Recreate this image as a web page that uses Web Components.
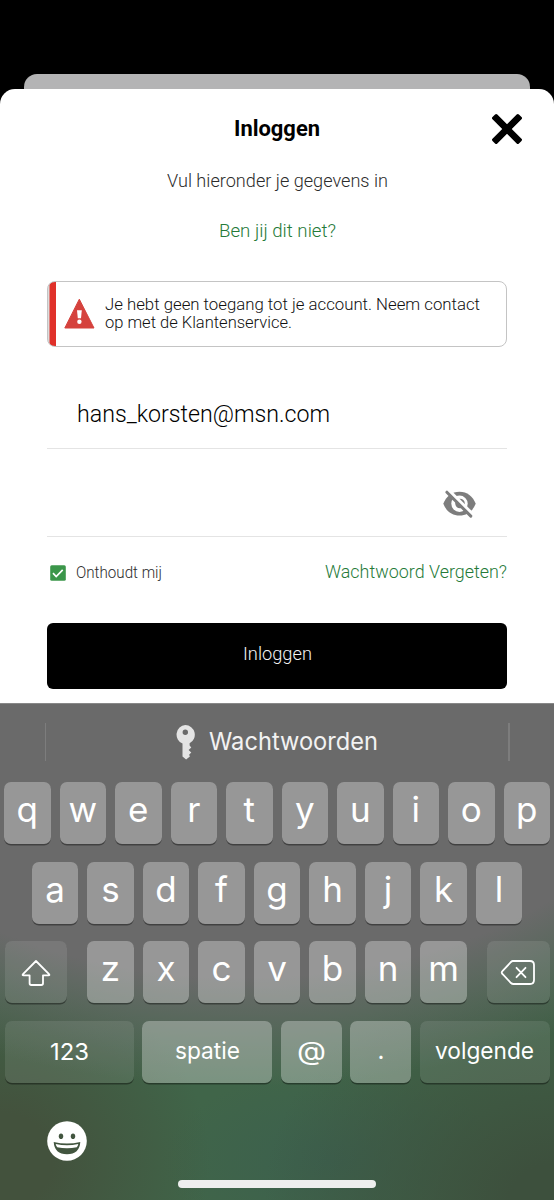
<!DOCTYPE html>
<html lang="nl">
<head>
<meta charset="utf-8">
<title>Inloggen</title>
<style>
html,body{margin:0;height:100%;background:#000;overflow:hidden}
</style>
</head>
<body>
<login-screen></login-screen>
<script>
const define=(name,html,setup)=>customElements.define(name,class extends HTMLElement{
  connectedCallback(){
    if(this.shadowRoot)return;
    const t=document.createElement('template');
    t.innerHTML=typeof html==='function'?html(this):html;
    this.attachShadow({mode:'open'}).appendChild(t.content.cloneNode(true));
    if(setup)setup(this,this.shadowRoot);
  }
});

/* One line of text, narrowed or widened to the width in its "w" attribute. */
define('fit-text',`<style>
:host{display:block;white-space:nowrap;line-height:1.3;flex:none}
span{display:inline-block;transform-origin:0 50%}
</style><span><slot></slot></span>`,(el,root)=>{
  const w=+el.getAttribute('w');
  el.style.fontSize=el.getAttribute('size')+'px';
  el.style.width=w+'px';
  const s=root.querySelector('span');
  s.style.transform='scaleX('+w/s.getBoundingClientRect().width+')';
});

define('close-icon',`<style>:host{display:block}svg{display:block}</style>
<svg width="32" height="32" viewBox="-16 -16 32 32"><rect x="-18.7" y="-3.4" width="37.4" height="6.8" rx="1.6" transform="rotate(45)"/><rect x="-18.7" y="-3.4" width="37.4" height="6.8" rx="1.6" transform="rotate(-45)"/></svg>`);

define('alert-box',`<style>
:host{display:flex;align-items:flex-start;box-sizing:border-box;height:66px;margin:38px 47px 0;border:1.5px solid #c4c4c4;border-radius:8px;overflow:hidden;background:linear-gradient(90deg,#ddd 1px,#e0312a 2px,#e0312a 8px,#fff 8px)}
svg{display:block;margin:16px 10px 0 16px;flex:none}
div{padding-top:12.5px;color:#111}
::slotted(fit-text){line-height:18px!important}
</style>
<svg width="31" height="31" viewBox="0 0 31 31"><path d="M15.3 1.2 30 30H.8Z" fill="#d5423d" stroke="#d5423d" stroke-linejoin="round"/><path d="M13 12.3h4.8l-.8 8h-3.2z" fill="#fff"/><circle cx="15.4" cy="23.7" r="2.2" fill="#fff"/></svg>
<div><slot></slot></div>`);

define('input-row',`<style>
:host{display:flex;align-items:center;justify-content:space-between;margin:0 47px;padding:0 30px;box-sizing:border-box;border-bottom:1.5px solid #e4e4e4;color:#111}
</style><slot></slot>`);

define('eye-off',`<style>:host{display:block;margin-left:auto}svg{display:block}</style>
<svg width="35" height="32" viewBox="0 0 35 32"><path d="M1.3 15.8C4 8.5 10 3.8 17.5 3.8S31 8.5 33.7 15.8C31 23 25 27.6 17.5 27.6S4 23 1.3 15.8Z" fill="#7d7d7d"/><circle cx="17.5" cy="15.8" r="8.2" fill="#fff"/><circle cx="18" cy="15.5" r="4.8" fill="#7d7d7d"/><path d="M5.5 1 31.5 27" stroke="#fff" stroke-width="3.2"/><path d="M4.9 4.2 28.8 28.1" stroke="#7d7d7d" stroke-width="3" stroke-linecap="round"/></svg>`);

define('check-box',`<style>:host{display:block}svg{display:block}</style>
<svg width="16" height="16" viewBox="0 0 16 16"><rect x=".2" y=".2" width="15.6" height="15.6" rx="1.5" fill="#3b964a"/><path d="m3 8.2 3.2 3.3 6.5-6.6" fill="none" stroke="#fff" stroke-width="1.7"/></svg>`);

define('login-sheet',`<style>
:host{display:block;height:614px;background:#fff;border-radius:15px 15px 0 0;font-family:Roboto,"Liberation Sans",sans-serif;overflow:hidden;font-weight:350}
header{display:grid;grid-template-columns:1fr auto 1fr;align-items:center;height:80px;font-weight:700;color:#000}
header close-icon{justify-self:end;margin:0 31.5px 0 0}
.line{display:flex;justify-content:center;align-items:center;height:25px}
.sub{color:#2c2c2c}
.green{color:#257a38}
.who{margin-top:24px;padding-top:1px;box-sizing:border-box}
.mail{height:102px;padding-top:33px;color:#000}
.pass{height:88px;padding-top:22px}
.opts{display:flex;align-items:center;justify-content:space-between;height:25px;margin:22px 47px 0 50px;color:#2c2c2c}
.opts .green{padding-top:2px}
.keep{display:flex;align-items:center;gap:10px;padding-top:3px}
.btn{display:flex;align-items:center;justify-content:center;height:66px;margin:38.5px 47px 0;border-radius:6px;background:#000;color:#f4f4f4;box-sizing:border-box;padding-bottom:2px}
</style>
<header><i></i><fit-text size="22" w="86">Inloggen</fit-text><close-icon></close-icon></header>
<div class="line sub"><fit-text size="18.6" w="221">Vul hieronder je gegevens in</fit-text></div>
<div class="line who green"><fit-text size="18.6" w="117">Ben jij dit niet?</fit-text></div>
<alert-box><fit-text size="17" w="375">Je hebt geen toegang tot je account. Neem contact</fit-text><fit-text size="17" w="187">op met de Klantenservice.</fit-text></alert-box>
<input-row class="mail"><fit-text size="23.5" w="253">hans_korsten@msn.com</fit-text></input-row>
<input-row class="pass"><eye-off></eye-off></input-row>
<div class="opts"><div class="keep"><check-box></check-box><fit-text size="16.3" w="86">Onthoudt mij</fit-text></div><fit-text class="green" size="18.6" w="182">Wachtwoord Vergeten?</fit-text></div>
<div class="btn"><fit-text size="18.8" w="69">Inloggen</fit-text></div>`);

define('key-cap',`<style>
:host{display:flex;align-items:center;justify-content:center;box-sizing:border-box;height:62px;width:46.5px;flex:none;border-radius:7px;background:rgba(255,255,255,.3);box-shadow:0 1.5px 0 rgba(0,0,0,.38);color:#fff;font-size:35px;font-weight:370;line-height:44px;padding-bottom:8px}
:host([dark]){background:rgba(255,255,255,.095)}
:host([dark]),:host([word]){font-size:24px;font-weight:400;padding-bottom:2px}
</style><slot></slot>`);

define('key-row',el=>`<style>:host{display:flex;justify-content:center;gap:9px}</style>`+
  [...el.getAttribute('keys')].map(k=>`<key-cap>${k}</key-cap>`).join(''));

define('suggestion-bar',`<style>
:host{display:flex;align-items:center;height:78px;box-sizing:border-box;padding:0 44.5px;color:#f2f2f2}
i{width:1.5px;height:38px;background:#7d7d7d;margin-top:-3px}
div{flex:1;display:flex;align-items:center;justify-content:center;gap:13px;padding:0 2px 3px 0}
svg{display:block}
</style><i></i><div><svg width="21" height="36" viewBox="0 0 21 36"><path fill="#e4e4e4" fill-rule="evenodd" d="M10.3 1a9.7 9.7 0 0 1 4.3 18.3v2.2l1.7 2-2.7 2.5 2.7 2.4-2.2 2.3.8 1.7-3.8 3-3.6-3V19.6A9.7 9.7 0 0 1 10.3 1Zm0 4.5a2.7 2.7 0 1 0 0 5.4 2.7 2.7 0 0 0 0-5.4Z"/></svg><fit-text size="24.5" w="169">Wachtwoorden</fit-text></div><i></i>`);

define('soft-keyboard',`<style>
:host{display:flex;flex-direction:column;height:497px;box-sizing:border-box;border-top:1px solid #888;overflow:hidden;font-family:Inter,"Liberation Sans",sans-serif;
background:
 radial-gradient(ellipse 600px 375px at 44% 0,#6a6a6a 0,#6a6a6a 73%,rgba(106,106,106,.5) 87%,rgba(106,106,106,0) 102%),
 radial-gradient(ellipse 210px 190px at 0 92%,#43523d 25%,rgba(67,82,61,0) 100%),
 radial-gradient(ellipse 290px 240px at 100% 100%,#3d503d 15%,rgba(61,80,61,0) 100%),
 radial-gradient(ellipse 170px 90px at 60% 92%,#3c604e,rgba(60,96,78,0)),
 #406549}
.rows{display:flex;flex-direction:column;gap:17.7px}
.r{display:flex;justify-content:space-between;margin:0 4.5px}
.side{width:62.5px}
.n123{width:129px}.space{width:130px}.s{width:61px}
.next{width:129.5px}
footer{flex:1;display:grid;grid-template-rows:1fr auto;padding:0 0 12px}
.emoji{align-self:start;margin:38px 0 0 47px;display:block}
.home{width:198px;height:8px;border-radius:4px;background:#eee;justify-self:center}
svg{display:block}
</style>
<suggestion-bar></suggestion-bar>
<div class="rows">
<key-row keys="qwertyuiop"></key-row>
<key-row keys="asdfghjkl"></key-row>
<div class="r"><key-cap dark class="side"><svg width="32" height="28" viewBox="0 0 32 28" style="margin-top:3px"><path d="M16 2 29 15.2Q30 16.3 28.5 16.3H23V24.3Q23 26 21.3 26H11.3Q9.6 26 9.6 24.3V16.3H3.5Q2 16.3 3 15.2Z" fill="none" stroke="#fff" stroke-width="1.8" stroke-linejoin="round"/></svg></key-cap><key-row keys="zxcvbnm"></key-row><key-cap dark class="side"><svg width="36" height="28" viewBox="0 0 36 28" style="margin-top:3px"><path d="M12.8 2H30Q34 2 34 6V21Q34 25 30 25H13.5Q12 25 11 24L2.4 15Q1 13.6 2.4 12.2L11 3Q12 2 12.8 2Z" fill="none" stroke="#fff" stroke-width="1.8"/><path d="M16.5 8.8 25.5 18.2M25.5 8.8 16.5 18.2" stroke="#fff" stroke-width="1.8" stroke-linecap="round"/></svg></key-cap></div>
<div class="r"><key-cap dark class="n123"><fit-text size="23.5" w="39" style="margin-top:3px">123</fit-text></key-cap><key-cap word class="space"><fit-text size="23.5" w="65">spatie</fit-text></key-cap><key-cap word class="s"><fit-text size="26" w="29">@</fit-text></key-cap><key-cap word class="s">.</key-cap><key-cap dark class="next"><fit-text size="23.5" w="99">volgende</fit-text></key-cap></div>
</div>
<footer><svg class="emoji" width="40" height="40" viewBox="0 0 40 40"><circle cx="20" cy="20" r="19.8" fill="#fff"/><g fill="#42553f"><ellipse cx="14" cy="15.3" rx="2.2" ry="2.8"/><ellipse cx="26" cy="15.3" rx="2.2" ry="2.8"/><path d="M6.7 21Q20 24 33.3 21 32.5 33.3 20 33.3 7.5 33.3 6.7 21Z"/></g><path d="M8.7 23Q20 25.5 31.3 23 31 25 29.8 26.3 20 28.3 10.2 26.3 9 25 8.7 23Z" fill="#fff"/></svg><div class="home"></div></footer>`);

define('login-screen',`<style>
:host{display:flex;flex-direction:column;width:554px;height:1200px;box-sizing:border-box;padding-top:74px;background:#000}
.back{height:15px;margin:0 24px;border-radius:13px 13px 0 0;background:#b4b4b5}
</style><div class="back"></div><login-sheet></login-sheet><soft-keyboard></soft-keyboard>`);
</script>
</body>
</html>
